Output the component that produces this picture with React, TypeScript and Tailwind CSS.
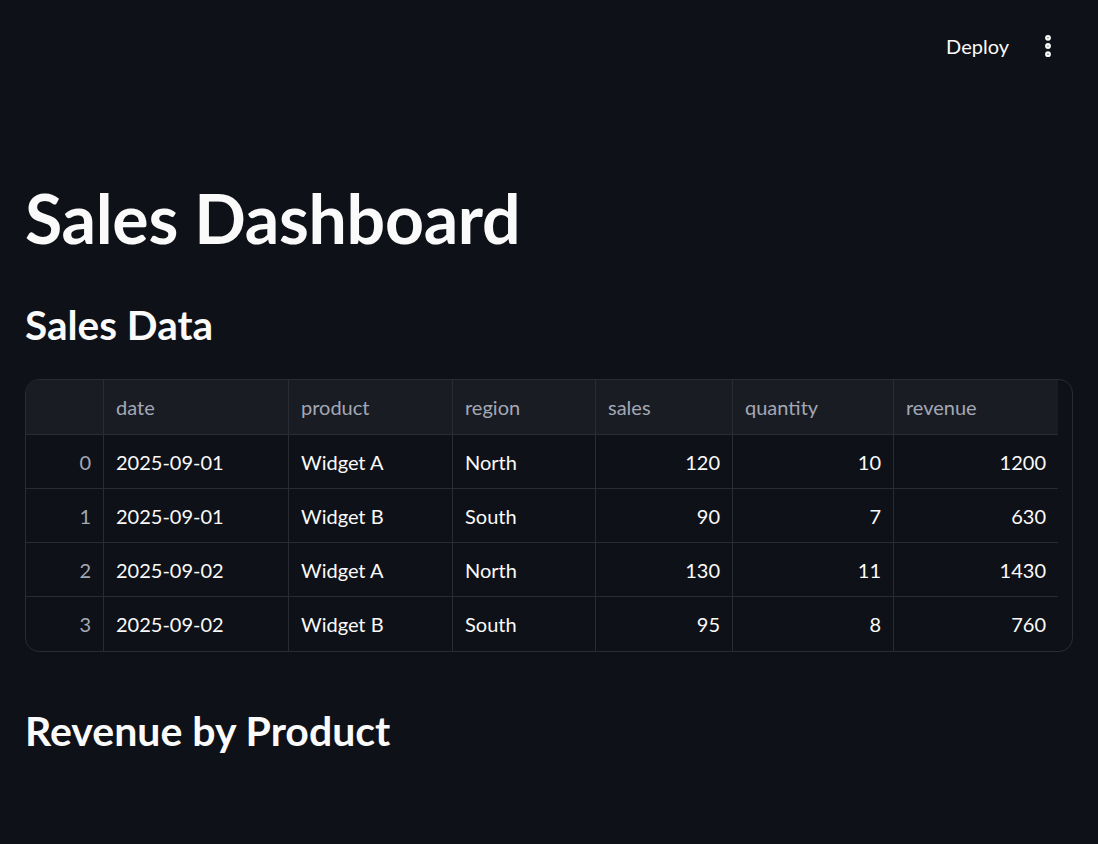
import { EllipsisVertical } from "lucide-react";

type Row = {
  date: string;
  product: string;
  region: string;
  sales: number;
  quantity: number;
  revenue: number;
};

const rows: Row[] = [
  { date: "2025-09-01", product: "Widget A", region: "North", sales: 120, quantity: 10, revenue: 1200 },
  { date: "2025-09-01", product: "Widget B", region: "South", sales: 90, quantity: 7, revenue: 630 },
  { date: "2025-09-02", product: "Widget A", region: "North", sales: 130, quantity: 11, revenue: 1430 },
  { date: "2025-09-02", product: "Widget B", region: "South", sales: 95, quantity: 8, revenue: 760 },
];

const cols = "grid grid-cols-[78px_185px_164px_143px_137px_161px_164px]";

export default function App() {
  return (
    <div className="min-h-[844px] bg-[#0e1117] text-[#fafafa] font-['Lato',sans-serif]">
      <header className="flex h-[92px] items-center justify-end gap-[17px] pr-[36px]">
        <button type="button" className="px-2 text-[20px] text-[#fafafa]">
          Deploy
        </button>
        <EllipsisVertical size={28} strokeWidth={3} className="text-[#fafafa]" />
      </header>

      <main className="px-[25px] pt-[86px]">
        <h1 className="text-[68px] font-bold leading-[80px] tracking-[-0.3px]">Sales Dashboard</h1>
        <h3 className="mt-[38px] text-[40.5px] font-bold leading-[58px]">Sales Data</h3>

        <div className="mt-[25px] w-[1048px] overflow-hidden rounded-[14px] border border-[#2a2c33] bg-[#0e1117]">
          <div className={`${cols} h-[55px] text-[20px] text-[#a3a8b5]`}>
            <div className="border-r border-b border-[#2a2c33] bg-[#1a1c24]" />
            {["date", "product", "region", "sales", "quantity", "revenue"].map((c, j) => (
              <div
                key={c}
                className={`flex items-center border-b border-[#2a2c33] bg-[#1a1c24] px-[12px] ${j < 5 ? "border-r" : ""}`}
              >
                {c}
              </div>
            ))}
          </div>
          {rows.map((r, i) => {
            const line = i < rows.length - 1 ? "border-b" : "";
            const cell = `flex items-center border-r border-[#2a2c33] px-[12px] ${line}`;
            return (
              <div key={i} className={`${cols} h-[54px] text-[20px]`}>
                <div className={`${cell} justify-end text-[#a3a8b5]`}>{i}</div>
                <div className={cell}>{r.date}</div>
                <div className={cell}>{r.product}</div>
                <div className={cell}>{r.region}</div>
                <div className={`${cell} justify-end`}>{r.sales}</div>
                <div className={`${cell} justify-end`}>{r.quantity}</div>
                <div className={`flex items-center justify-end border-[#2a2c33] px-[12px] ${line}`}>{r.revenue}</div>
              </div>
            );
          })}
        </div>

        <h3 className="mt-[50px] text-[41px] font-bold leading-[58px]">Revenue by Product</h3>
      </main>
    </div>
  );
}
